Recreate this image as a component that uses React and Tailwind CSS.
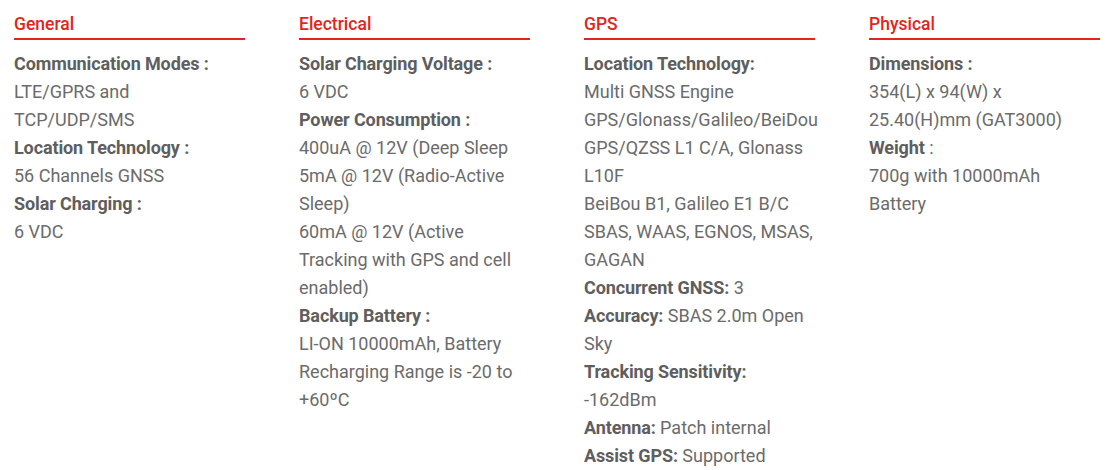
const columns = [
  {
    title: "General",
    items: [
      { label: "Communication Modes :", block: true, value: ["LTE/GPRS and TCP/UDP/SMS"] },
      { label: "Location Technology :", block: true, value: ["56 Channels GNSS"] },
      { label: "Solar Charging :", block: true, value: ["6 VDC"] },
    ],
  },
  {
    title: "Electrical",
    items: [
      { label: "Solar Charging Voltage :", block: true, value: ["6 VDC"] },
      {
        label: "Power Consumption :",
        block: true,
        value: [
          "400uA @ 12V (Deep Sleep",
          "5mA @ 12V (Radio-Active Sleep)",
          "60mA @ 12V (Active Tracking with GPS and cell enabled)",
        ],
      },
      {
        label: "Backup Battery :",
        block: true,
        value: ["LI-ON 10000mAh, Battery Recharging Range is -20 to +60ºC"],
      },
    ],
  },
  {
    title: "GPS",
    items: [
      {
        label: "Location Technology:",
        block: true,
        value: [
          "Multi GNSS Engine",
          "GPS/Glonass/Galileo/BeiDou",
          "GPS/QZSS L1 C/A, Glonass L10F",
          "BeiBou B1, Galileo E1 B/C",
          "SBAS, WAAS, EGNOS, MSAS, GAGAN",
        ],
      },
      { label: "Concurrent GNSS:", value: ["3"] },
      { label: "Accuracy:", value: ["SBAS 2.0m Open Sky"] },
      { label: "Tracking Sensitivity:", block: true, value: ["-162dBm"] },
      { label: "Antenna:", value: ["Patch internal"] },
      { label: "Assist GPS:", value: ["Supported"] },
    ],
  },
  {
    title: "Physical",
    items: [
      { label: "Dimensions :", block: true, value: ["354(L) x 94(W) x 25.40(H)mm (GAT3000)"] },
      { label: "Weight", suffix: " :", block: true, value: ["700g with 10000mAh Battery"] },
    ],
  },
];

function Label({ children }) {
  return <span className="font-bold tracking-[-0.12px] text-[#5e5e5e]">{children}</span>;
}

function Item({ item }) {
  if (item.block) {
    return (
      <div>
        <div>
          <Label>{item.label}</Label>
          {item.suffix && <span>{item.suffix}</span>}
        </div>
        {item.value.map((v, i) => (
          <div key={i}>{v}</div>
        ))}
      </div>
    );
  }
  return (
    <div>
      <Label>{item.label}</Label> {item.value[0]}
    </div>
  );
}

export default function App() {
  return (
    <div
      className="w-[1108px] h-[470px] bg-white overflow-hidden"
      style={{ fontFamily: "Roboto, 'Liberation Sans', sans-serif" }}
    >
      <div className="flex gap-[54px] px-[14px] pt-[11px]">
        {columns.map((col) => (
          <div key={col.title} className="w-[231px] shrink-0">
            <h3 className="text-[17.5px] font-medium leading-[26px] text-[#e3241b] pb-[1px] border-b-2 border-[#e3241b]">
              {col.title}
            </h3>
            <div className="mt-[10px] text-[18px] leading-[28px] text-[#6b6b6b]">
              {col.items.map((item, i) => (
                <Item key={i} item={item} />
              ))}
            </div>
          </div>
        ))}
      </div>
    </div>
  );
}
